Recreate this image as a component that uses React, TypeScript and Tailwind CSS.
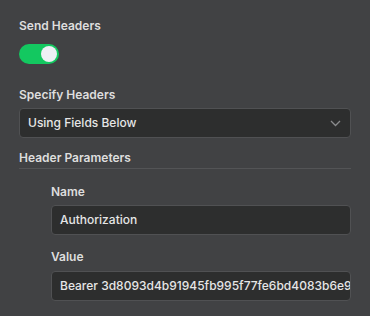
import React from "react";

function Label({ children, className = "" }: { children: React.ReactNode; className?: string }) {
  return (
    <div className={"h-[18px] leading-[18px] text-[12px] font-semibold text-[#dedede] " + className}>
      {children}
    </div>
  );
}

function Field({ children }: { children: React.ReactNode }) {
  return (
    <div className="h-[30px] rounded-[4px] border border-[#505153] bg-[#2d2e2e] flex items-center pl-[8px] overflow-hidden">
      <span className="text-[12px] font-medium text-[#e6e6e6] whitespace-nowrap">{children}</span>
    </div>
  );
}

export default function App() {
  return (
    <div
      className="w-[370px] h-[316px] overflow-hidden bg-[#414244] pl-[19px] pr-[19px] pt-[17px]"
      style={{ fontFamily: "Inter, 'Noto Sans', sans-serif" }}
    >
      <Label>Send Headers</Label>
      <div className="mt-[9px] w-[40px] h-[20px] rounded-full bg-[#13c860] flex items-center justify-end pr-[2px]">
        <div className="w-[16px] h-[16px] rounded-full bg-[#eef0f6]" />
      </div>

      <Label className="mt-[22px]">Specify Headers</Label>
      <div className="mt-[4px] h-[30px] rounded-[4px] border border-[#505153] bg-[#2d2e2e] flex items-center justify-between pl-[8px] pr-[9px]">
        <span className="text-[12px] font-medium text-[#e6e6e6]">Using Fields Below</span>
        <svg width="11" height="7" viewBox="0 0 11 7" fill="none">
          <path d="M1 1l4.5 4.5L10 1" stroke="#8a8b8d" strokeWidth="1.3" />
        </svg>
      </div>

      <Label className="mt-[11px]">Header Parameters</Label>
      <div className="mt-[1px] h-px bg-[#535456]" />

      <div className="pl-[32px]">
        <Label className="mt-[14px]">Name</Label>
        <div className="mt-[4px]">
          <Field>Authorization</Field>
        </div>
        <Label className="mt-[13px]">Value</Label>
        <div className="mt-[5px]">
          <Field>Bearer 3d8093d4b91945fb995f77fe6bd4083b6e96</Field>
        </div>
      </div>
    </div>
  );
}
